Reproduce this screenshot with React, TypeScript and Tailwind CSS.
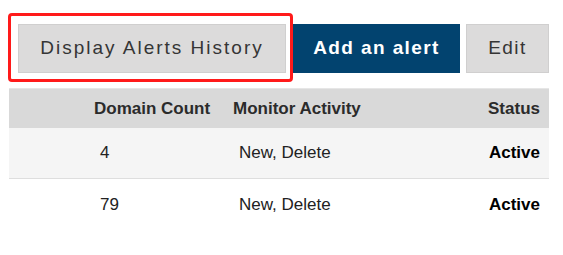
import React from "react";

const ROWS = [
  { count: "4", activity: "New, Delete", status: "Active", shaded: true },
  { count: "79", activity: "New, Delete", status: "Active", shaded: false },
];

export default function App() {
  return (
    <div
      className="w-[563px] h-[255px] bg-white overflow-hidden"
      style={{ fontFamily: '"Liberation Sans", Arial, sans-serif' }}
    >
      {/* Toolbar */}
      <div className="flex items-start pt-[13px] pl-[8px]">
        {/* highlighted button */}
        <div className="border-[3px] border-[#ff1a1a] rounded-[4px] pt-[8px] pl-[7px] pr-[4px] pb-[6px]">
          <button className="w-[268px] h-[49px] bg-[#dcdbdb] border border-[#d0cfcf] text-[19px] tracking-[2px] text-[#353535] flex items-center justify-center">
            Display Alerts History
          </button>
        </div>
        <button className="mt-[11px] w-[167px] h-[49px] bg-[#02436f] text-white text-[19px] font-bold tracking-[1.4px] flex items-center justify-center">
          Add an alert
        </button>
        <button className="mt-[11px] ml-[6px] w-[83px] h-[49px] bg-[#dcdbdb] border border-[#d0cfcf] text-[19px] tracking-[1.5px] text-[#353535] flex items-center justify-center">
          Edit
        </button>
      </div>

      {/* Table */}
      <div className="ml-[9px] mt-[6px] w-[540px] border-t border-[#e6e6e6]">
        <div className="grid grid-cols-[218px_1fr_auto] items-center h-[39px] bg-[#d9d9d9] text-[17px] font-bold text-[#2b2b2b]">
          <div className="pl-[85px]">Domain Count</div>
          <div className="pl-[6px]">Monitor Activity</div>
          <div className="pr-[9px]">Status</div>
        </div>
        {ROWS.map((row, i) => (
          <div
            key={i}
            className={
              row.shaded
                ? "grid grid-cols-[218px_1fr_auto] items-center h-[51px] bg-[#f5f5f5] border-b border-[#dedede] text-[17px] text-[#222]"
                : "grid grid-cols-[218px_1fr_auto] items-center h-[51px] bg-white text-[17px] text-[#222]"
            }
          >
            <div className="pl-[91px]">{row.count}</div>
            <div className="pl-[12px]">{row.activity}</div>
            <div className="pr-[9px] font-bold text-black">{row.status}</div>
          </div>
        ))}
      </div>
    </div>
  );
}
